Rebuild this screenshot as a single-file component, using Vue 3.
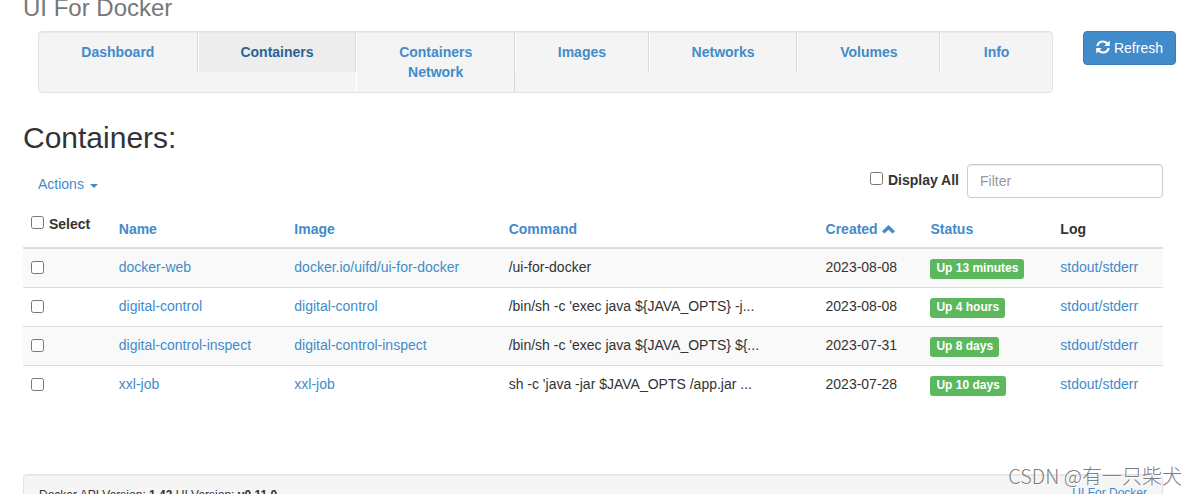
<script setup>
import { ref, computed } from 'vue'

const tabs = [
  { label: 'Dashboard' },
  { label: 'Containers', active: true },
  { label: 'Containers Network' },
  { label: 'Images' },
  { label: 'Networks' },
  { label: 'Volumes' },
  { label: 'Info' }
]

const containers = ref([
  { name: 'docker-web', image: 'docker.io/uifd/ui-for-docker', command: '/ui-for-docker', created: '2023-08-08', status: 'Up 13 minutes', checked: false },
  { name: 'digital-control', image: 'digital-control', command: "/bin/sh -c 'exec java ${JAVA_OPTS} -j...", created: '2023-08-08', status: 'Up 4 hours', checked: false },
  { name: 'digital-control-inspect', image: 'digital-control-inspect', command: "/bin/sh -c 'exec java ${JAVA_OPTS} ${...", created: '2023-07-31', status: 'Up 8 days', checked: false },
  { name: 'xxl-job', image: 'xxl-job', command: "sh -c 'java -jar $JAVA_OPTS /app.jar ...", created: '2023-07-28', status: 'Up 10 days', checked: false }
])

const filter = ref('')
const displayAll = ref(false)
const visible = computed(() => containers.value.filter((c) => (c.name + c.image).includes(filter.value)))
const allChecked = computed({
  get: () => containers.value.every((c) => c.checked),
  set: (value) => containers.value.forEach((c) => { c.checked = value })
})
</script>

<template>
  <div class="page">
    <div class="container">
      <h1 class="brand">UI For Docker</h1>

      <header class="masthead">
        <nav class="tabs">
          <a v-for="tab in tabs" :key="tab.label" href="#" class="tab" :class="{ active: tab.active }">{{ tab.label }}</a>
        </nav>
        <button type="button" class="refresh">
          <svg class="refresh-icon" viewBox="0 0 14 14" aria-hidden="true">
            <path class="arc" d="M1.3 6C2 3.3 4.2 1.5 7 1.5c1.8 0 3.3.7 4.4 1.9M12.7 8c-.7 2.7-2.9 4.5-5.7 4.5-1.8 0-3.3-.7-4.4-1.9" />
            <path d="M13.8.4V6H8.2zM.2 13.6V8h5.6z" />
          </svg>
          <span>Refresh</span>
        </button>
      </header>

      <h2 class="heading">Containers:</h2>

      <div class="toolbar">
        <button type="button" class="actions">Actions <span class="caret"></span></button>
        <div class="filters">
          <label class="check"><input v-model="displayAll" type="checkbox"><span>Display All</span></label>
          <input v-model="filter" class="filter" type="text" placeholder="Filter" aria-label="Filter">
        </div>
      </div>

      <table class="grid">
        <colgroup>
          <col class="c-select"><col class="c-name"><col class="c-image"><col class="c-command"><col class="c-created"><col class="c-status"><col>
        </colgroup>
        <thead>
          <tr>
            <th><label class="check select-all"><input v-model="allChecked" type="checkbox"><span>Select</span></label></th>
            <th><a href="#">Name</a></th>
            <th><a href="#">Image</a></th>
            <th><a href="#">Command</a></th>
            <th>
              <a href="#">Created
                <svg class="chevron" viewBox="0 0 13 9" aria-hidden="true"><path d="M6.5 0 13 6.2 10.6 8.6 6.5 4.7 2.4 8.6 0 6.2z" /></svg>
              </a>
            </th>
            <th><a href="#">Status</a></th>
            <th>Log</th>
          </tr>
        </thead>
        <tbody>
          <tr v-for="c in visible" :key="c.name">
            <td><input v-model="c.checked" class="row-check" type="checkbox" :aria-label="c.name"></td>
            <td><a href="#">{{ c.name }}</a></td>
            <td><a href="#">{{ c.image }}</a></td>
            <td>{{ c.command }}</td>
            <td>{{ c.created }}</td>
            <td class="status"><span class="badge">{{ c.status }}</span></td>
            <td><a href="#">stdout/stderr</a></td>
          </tr>
        </tbody>
      </table>

      <footer class="footer">
        <p class="versions">Docker API Version: <strong>1.43</strong> UI Version: <strong>v0.11.0</strong></p>
        <a href="#">UI For Docker</a>
      </footer>
    </div>
    <div class="watermark">CSDN @有一只柴犬</div>
  </div>
</template>

<style>
body {
  margin: 0;
  background: #fff;
}
</style>

<style scoped>
.page {
  position: relative;
  height: 100vh;
  overflow: hidden;
  font: 14px/20px "Liberation Sans", Arial, sans-serif;
  color: #333;
}
.page *,
.page *::before {
  box-sizing: border-box;
}
.container {
  padding: 0 35px 0 23px;
}
a {
  color: #428bca;
  text-decoration: none;
}
input[type="checkbox"] {
  width: 13px;
  height: 13px;
  margin: 0;
}
.brand {
  margin: 0;
  font-size: 24px;
  line-height: 16px;
  font-weight: 400;
  color: #777;
}
.masthead {
  display: flex;
  align-items: flex-start;
  gap: 30px;
  margin: 15px -13px 0 15px;
}
.tabs {
  display: grid;
  grid-template-columns: 159fr 159fr 159fr 134fr 149fr 143fr 112fr;
  align-items: start;
  flex: 1;
  background: #f4f4f4;
  border: 1px solid #e3e3e3;
  border-radius: 4px;
  box-shadow: inset 0 1px 1px rgba(0, 0, 0, 0.05);
}
.tab {
  min-width: 0;
  padding: 10px 15px;
  border-left: 1px solid #fff;
  border-right: 1px solid #d9d9d9;
  font-weight: 700;
  text-align: center;
}
.tab:first-child {
  border-left: 0;
}
.tab:last-child {
  border-right: 0;
}
.tab.active {
  color: #2a6496;
  background: #ededed;
  box-shadow: inset 0 1px 1px rgba(0, 0, 0, 0.03);
}
.refresh {
  display: flex;
  align-items: center;
  gap: 4px;
  height: 34px;
  padding: 0 12px;
  border: 1px solid #357ebd;
  border-radius: 4px;
  background: #428bca;
  color: #fff;
  font: inherit;
}
.refresh-icon {
  width: 14px;
  height: 14px;
  margin-bottom: 2px;
  fill: currentColor;
}
.refresh-icon .arc {
  fill: none;
  stroke: currentColor;
  stroke-width: 2.2;
}
.heading {
  margin: 28px 0 10px;
  font-size: 30px;
  line-height: 33px;
  font-weight: 400;
}
.toolbar {
  display: flex;
  justify-content: space-between;
  align-items: flex-start;
  height: 42px;
}
.actions {
  display: flex;
  align-items: center;
  gap: 6px;
  padding: 10px 15px;
  border: 0;
  background: none;
  color: #428bca;
  font: inherit;
}
.caret {
  margin-top: 3px;
  border-top: 4px solid;
  border-left: 4px solid transparent;
  border-right: 4px solid transparent;
}
.filters {
  display: flex;
  align-items: flex-start;
  gap: 8px;
}
.check {
  display: flex;
  align-items: flex-start;
  gap: 5px;
  font-weight: 700;
}
.check input[type="checkbox"] {
  margin-top: 2px;
}
.filters .check {
  padding-top: 6px;
}
.filter {
  width: 196px;
  height: 34px;
  padding: 6px 12px;
  border: 1px solid #ccc;
  border-radius: 4px;
  box-shadow: inset 0 1px 1px rgba(0, 0, 0, 0.075);
  background: #fff;
  color: #555;
  font: inherit;
}
.filter::placeholder {
  color: #999;
}
.grid {
  width: 100%;
  table-layout: fixed;
  border-collapse: separate;
  border-spacing: 0;
}
.c-select { width: 7.7%; }
.c-name { width: 15.4%; }
.c-image { width: 18.8%; }
.c-command { width: 27.8%; }
.c-created { width: 9.2%; }
.c-status { width: 11.4%; }
th {
  padding: 8px;
  border-bottom: 2px solid #ddd;
  text-align: left;
  vertical-align: bottom;
  white-space: nowrap;
}
.select-all {
  margin-bottom: 5px;
}
.chevron {
  width: 13px;
  height: 9px;
  fill: currentColor;
}
td {
  height: 39px;
  padding: 8px;
  border-bottom: 1px solid #ddd;
  vertical-align: top;
  white-space: nowrap;
}
tbody tr:nth-child(odd) {
  background: #f9f9f9;
}
tbody tr:last-child td {
  border-bottom-color: transparent;
}
.row-check {
  display: block;
}
td .row-check[type="checkbox"] {
  margin-top: 4px;
}
td.status {
  padding-top: 10px;
}
.badge {
  display: block;
  width: fit-content;
  padding: 3px 6px 5px;
  border-radius: 3px;
  background: #5cb85c;
  color: #fff;
  font-size: 12px;
  line-height: 12px;
  font-weight: 700;
}
.footer {
  display: flex;
  justify-content: space-between;
  align-items: flex-start;
  margin-top: 69px;
  padding: 9px 15px 15px;
  border: 1px solid #e3e3e3;
  border-radius: 4px;
  background: #f5f5f5;
  box-shadow: inset 0 1px 1px rgba(0, 0, 0, 0.05);
  font-size: 12px;
  line-height: 18px;
}
.versions {
  margin: 2px 0 0;
}
.watermark {
  position: absolute;
  right: 16px;
  bottom: 4px;
  font: 300 20px/28px "Noto Sans CJK SC", sans-serif;
  color: #808080;
  text-shadow: 1px 1px 0 #fff;
}
</style>
